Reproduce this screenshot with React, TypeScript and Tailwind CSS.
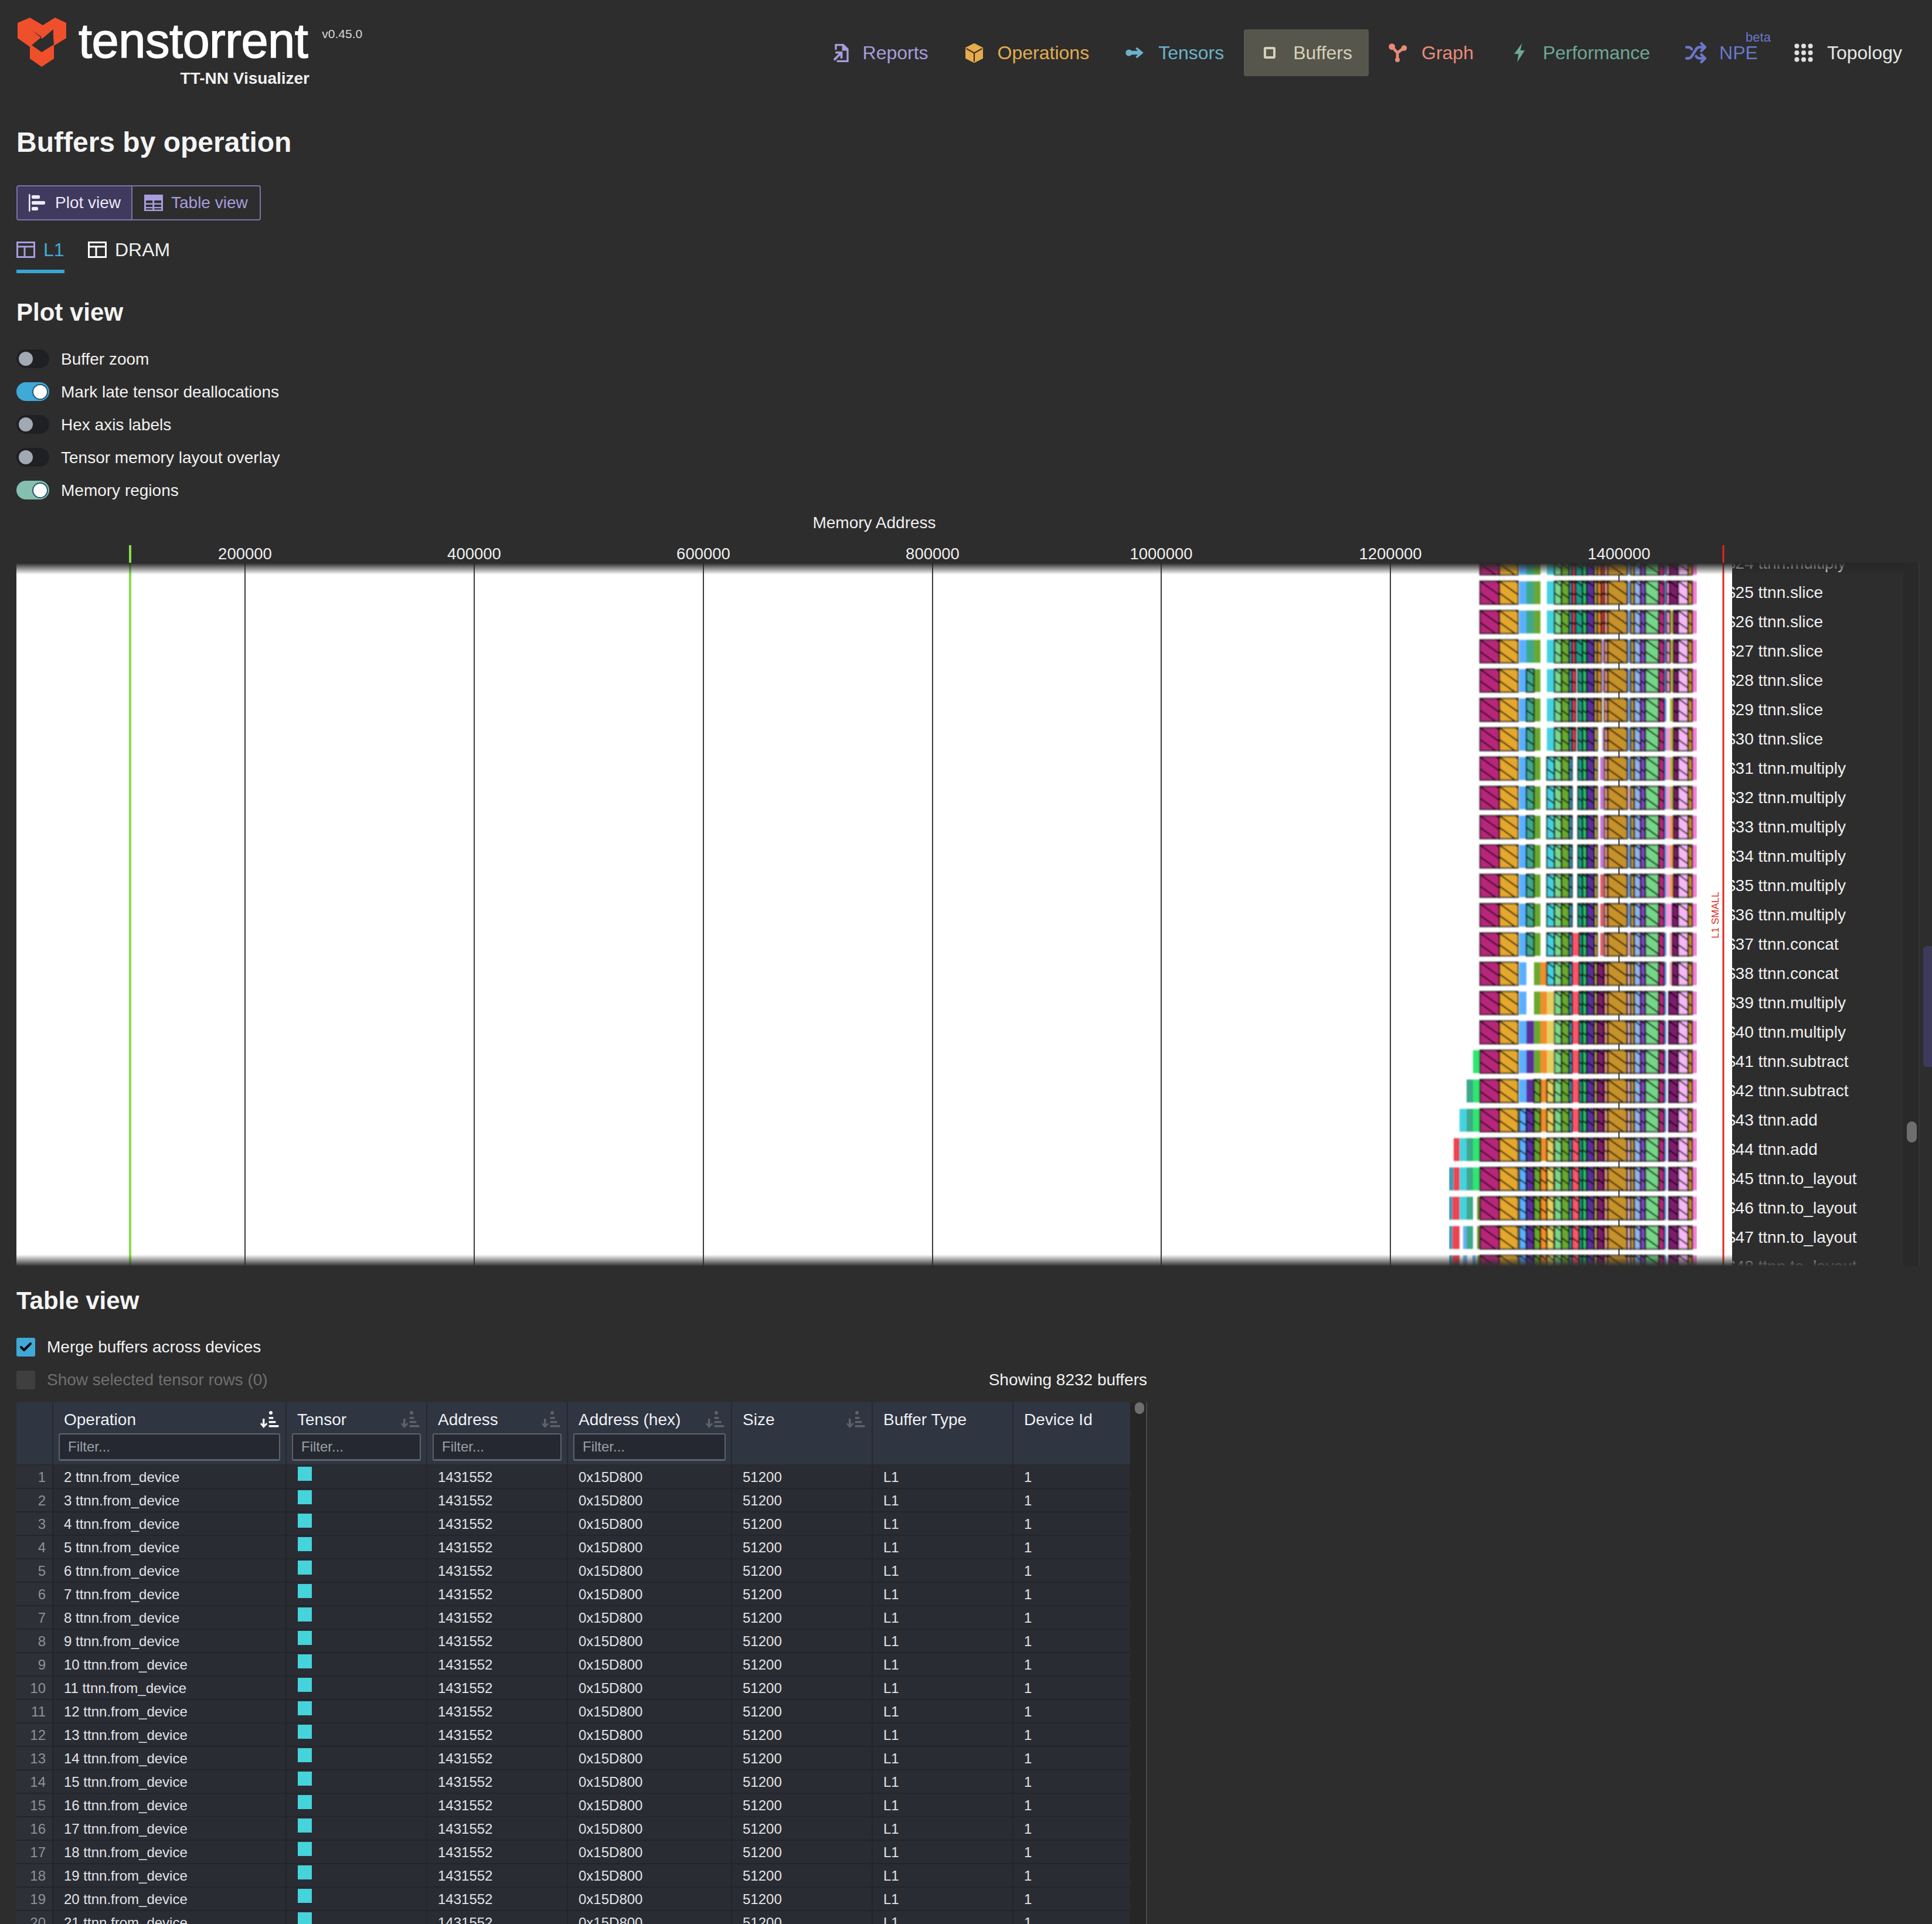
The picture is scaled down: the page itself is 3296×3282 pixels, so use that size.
import { Shuffle, Check } from "lucide-react";

type Seg = [number, number, string];

// memory chart segments: start, end, colour (page x)
const SEGS: Record<string, Seg> = {
  a: [2525, 2558, "#b8267c"],
  b: [2558, 2590, "#e5a82f"],
  c: [2592, 2604, "#5ab0ff"],
  d: [2604, 2617, "#3ea98a"],
  D: [2604, 2617, "#5b2f9b"],
  e: [2617, 2628, "#6aa82f"],
  f: [2628, 2639, "#f28c2c"],
  g: [2639, 2652, "#45d2e0"],
  g2: [2639, 2651, "#e5cf60"],
  h: [2652, 2664, "#7dd68a"],
  i: [2664, 2677, "#6aa82f"],
  j: [2677, 2682, "#3a9cc8"],
  k: [2682, 2688, "#e8424f"],
  K1: [2682, 2694, "#ff5566"],
  l: [2688, 2700, "#1f9a8a"],
  l2: [2692, 2700, "#1f9a8a"],
  l3: [2694, 2700, "#1f9a8a"],
  m: [2700, 2707, "#2cc463"],
  n: [2707, 2720, "#5b2f9b"],
  o: [2720, 2725, "#c9b452"],
  p: [2725, 2732, "#d98a2a"],
  q: [2732, 2737, "#e8424f"],
  P: [2733, 2737, "#c9a8e8"],
  P2: [2730, 2736, "#c77ad8"],
  P3: [2730, 2736, "#e0606a"],
  Q: [2725, 2736, "#7e1a6c"],
  r: [2737, 2743, "#e89a80"],
  s: [2743, 2776, "#c8922a"],
  t: [2776, 2782, "#6fa6ee"],
  U: [2776, 2782, "#d8b0d0"],
  u: [2782, 2788, "#c8a02a"],
  v: [2788, 2799, "#93b3ea"],
  w: [2799, 2807, "#8444c0"],
  x: [2807, 2830, "#74d588"],
  y: [2830, 2839, "#b8267c"],
  z: [2839, 2843, "#6fa6ee"],
  A: [2843, 2849, "#fb9ad8"],
  A2: [2843, 2853, "#fb9ad8"],
  A3: [2848, 2853, "#fbb0b8"],
  B: [2849, 2855, "#b8b83a"],
  B2: [2849, 2855, "#e9a24a"],
  C: [2855, 2863, "#7e1a6c"],
  C1: [2848, 2863, "#7e1a6c"],
  C2: [2853, 2863, "#7e1a6c"],
  C3: [2847, 2863, "#7e1a6c"],
  E: [2863, 2880, "#f5b8f5"],
  F: [2880, 2887, "#c8922a"],
  G: [2887, 2895, "#f77fd8"],
  H: [2513, 2525, "#2ee66f"],
  I: [2502, 2513, "#3ea98a"],
  J: [2490, 2502, "#45d2e0"],
  K: [2480, 2490, "#f0424f"],
  K2: [2478, 2490, "#f0424f"],
  L: [2472, 2480, "#3a9cb8"],
  L2: [2472, 2478, "#3a9cb8"],
  M: [2520, 2525, "#6a962f"],
  N: [2496, 2503, "#6ab0f0"],
  O: [2512, 2518, "#6aa0e8"],
};

const TAIL = "t u* v* w* x* y* z";
const LATE = "U* u* v* w* x* y* z";
const END = "E* F* G";
const HEAD = "a* b* c";
const MID = "h* i* j* K1 l3* m* n* o* Q* r* s*";

const ROWS: [number, string, string][] = [
  [24, "ttnn.multiply", `${HEAD} d e g h* i* j* k* l* m* n* o* p* q* r* s* ${TAIL} A* C1* ${END}`],
  [25, "ttnn.slice", `${HEAD} d e g h* i* j* k* l* m* n* o* p* q* r* s* ${TAIL} A* C1* ${END}`],
  [26, "ttnn.slice", `${HEAD} d e g h* i* j* k* l* m* n* o* p* q* r* s* ${TAIL} A* B C* ${END}`],
  [27, "ttnn.slice", `${HEAD} d e g h* i* j* k* l* m* n* o* p* P r* s* ${TAIL} A* B C* ${END}`],
  [28, "ttnn.slice", `${HEAD} d* e g h* i* j* k* l2* m* n* o* p* P r* s* ${TAIL} A* B C* ${END}`],
  [29, "ttnn.slice", `${HEAD} d* e g h* i* j* k* l2* m* n* o* p* r* s* ${TAIL} B C* ${END}`],
  [30, "ttnn.slice", `${HEAD} d* e g h* i* j* k* l2* m* n* o* P r* s* ${TAIL} A B C* ${END}`],
  [31, "ttnn.multiply", `${HEAD} d* e g* h* i* j* l2* m* n* o* P2 r* s* ${TAIL} A B C* ${END}`],
  [32, "ttnn.multiply", `${HEAD} d* e g* h* i* j* l2* m* n* o* P2 r* s* U u* v* w* x* y* z A B C* ${END}`],
  [33, "ttnn.multiply", `${HEAD} d* e g* h* i* j* l2* m* n* o* P2 r* s* ${TAIL} A B2 C* ${END}`],
  [34, "ttnn.multiply", `${HEAD} d* e g* h* i* j* l2* m* n* o* P2 r* s* ${TAIL} A B2 C* ${END}`],
  [35, "ttnn.multiply", `${HEAD} d* e g* h* i* j* l2* m* n* o* P3 r* s* ${TAIL} A B2 C* ${END}`],
  [36, "ttnn.multiply", `${HEAD} d* e g* h* i* j* l2* m* n* o* P3 r* s* ${TAIL} A2 C2* ${END}`],
  [37, "ttnn.concat", `${HEAD} d* e g* h* i* j* K1 l3* m* n* o* P3 r* s* U u* v* w* x* y* z A3 C2* ${END}`],
  [38, "ttnn.concat", `${HEAD} e f g* ${MID} ${LATE} A3 C2* ${END}`],
  [39, "ttnn.multiply", `${HEAD} e f g2 ${MID} ${LATE} C3* ${END}`],
  [40, "ttnn.multiply", `${HEAD} D e f g2 ${MID} ${LATE} C3* ${END}`],
  [41, "ttnn.subtract", `H ${HEAD} D e f g2 ${MID} ${LATE} C3* ${END}`],
  [42, "ttnn.subtract", `I H ${HEAD} D e* f g2* ${MID} ${LATE} C3* ${END}`],
  [43, "ttnn.add", `J I H a* b* c* D* e* f g2* ${MID} ${LATE} C3* ${END}`],
  [44, "ttnn.add", `K J I H a* b* c* D* e* f g2* h* i* j* K1* l3* m* n* o* Q* r* s* ${LATE} C3* ${END}`],
  [45, "ttnn.to_layout", `L K J I H a* b* c* D* e* f* g2* h* i* j* K1* l3* m* n* o* Q* r* s* ${LATE} C3* ${END}`],
  [46, "ttnn.to_layout", `L2 K2 J I M a* b* c* D* e* f* g2* h* i* j* K1* l3* m* n* o* Q* r* s* ${LATE} C3* ${END}`],
  [47, "ttnn.to_layout", `L2 K2 N I M a* b* c* D* e* f* g2* h* i* j* K1* l3* m* n* o* Q* r* s* ${LATE} C3* ${END}`],
  [48, "ttnn.to_layout", `L2 K2 N O M a* b* c* D* e* f* g2* h* i* j* K1* l3* m* n* o* Q* r* s* ${LATE} C3* ${END}`],
];

const TICKS: [number, string][] = [
  [418, "200000"],
  [809, "400000"],
  [1200, "600000"],
  [1591, "800000"],
  [1981, "1000000"],
  [2372, "1200000"],
  [2762, "1400000"],
];

const BAR_H = 39;

const Hatch = ({ w }: { w: number }) => {
  const lines = [];
  const run = w * 0.72;
  for (let y0 = -Math.ceil(run / 20) * 20; y0 < BAR_H; y0 += 20) {
    lines.push(<line key={y0} x1={0} y1={y0} x2={w} y2={y0 + run} stroke="#000" strokeOpacity={0.78} strokeWidth={2.4} />);
  }
  return <>{lines}</>;
};

const Bar = ({ n, spec }: { n: number; spec: string }) => {
  const y = 31.5 + (n - 25) * 50;
  const tokens = spec.split(" ").filter(Boolean);
  return (
    <g>
      {tokens
        .filter((t) => !t.endsWith("*"))
        .map((t) => {
          const [x0, x1, c] = SEGS[t];
          return <rect key={t} x={x0 - 28} y={y} width={x1 - x0} height={BAR_H} fill={c} />;
        })}
      {tokens
        .filter((t) => t.endsWith("*"))
        .map((t) => {
          const [x0, x1, c] = SEGS[t.slice(0, -1)];
          const w = x1 - x0;
          return (
            <g key={t}>
              <rect x={x0 - 28} y={y} width={w} height={BAR_H} fill={c} />
              <svg x={x0 - 28} y={y} width={w} height={BAR_H}>
                <Hatch w={w} />
              </svg>
              <rect x={x0 - 28} y={y} width={w} height={BAR_H} fill="none" stroke="#000" strokeOpacity={0.68} strokeWidth={2.6} />
            </g>
          );
        })}
    </g>
  );
};

const MemoryPlot = () => (
  <svg width={2927} height={1230} className="block shrink-0">
    <defs>
      <filter id="soft" x="0" y="0" width="1" height="1">
        <feGaussianBlur stdDeviation="0.8" />
      </filter>
    </defs>
    {TICKS.map(([x, label]) => (
      <text key={label} x={x - 28} y={24} textAnchor="middle" fontSize={27.5} fill="#efefef">
        {label}
      </text>
    ))}
    <svg x={0} y={30} width={2927} height={1200}>
      <rect width={2927} height={1200} fill="#fff" />
      {TICKS.map(([x, label]) => (
        <line key={label} x1={x - 28} x2={x - 28} y1={0} y2={1200} stroke="#3a3a3a" strokeWidth={2} />
      ))}
      <g filter="url(#soft)">
        {ROWS.map(([n, , spec]) => (
          <Bar key={n} n={n} spec={spec} />
        ))}
      </g>
    </svg>
    <line x1={194} x2={194} y1={0} y2={1230} stroke="#84e04a" strokeWidth={4} />
    <line x1={2912} x2={2912} y1={0} y2={1230} stroke="#e0281e" strokeWidth={3} />
    <text x={2904} y={631} textAnchor="middle" fontSize={17} fill="#e0281e" transform="rotate(-90 2904 631)">
      L1 SMALL
    </text>
  </svg>
);

const Logo = () => (
  <svg viewBox="0 0 84 84" className="w-[84px] h-[84px] shrink-0">
    <path
      fill="#f04f2c"
      d="M21 0 L43 13 L64 0 L83 9 V35 L62 48 V70 L41 84 L21 70 V50 L0 35 V9 Z"
    />
    <path fill="#2d2d2d" d="M24 21 L42 36 L61 20 V34 L62 46 L41 59 L24 47 L41 33 Z" />
  </svg>
);

const ReportsIcon = () => (
  <svg viewBox="1.8 0.6 12.6 14.8" className="w-[29px] h-[33px] ml-1.5 shrink-0" fill="#a79ddd">
    <path d="M3.5 1h6.7L14 4.8V15H5v-1.5h7.5V6.2H9V2.5H5v3H3.5z" />
    <path d="M4 6.8h5.4v5.4H7.7V9.7l-4.2 4.2-1.2-1.2 4.2-4.2H4z" />
  </svg>
);

const CubeIcon = () => (
  <svg viewBox="1 0.2 14 15.6" className="w-[30px] h-[33px] shrink-0">
    <path d="M8 .6 14.6 4v8L8 15.4 1.4 12V4z" fill="#e2ac4f" stroke="#e2ac4f" strokeLinejoin="round" />
    <path d="M1.6 4.4 8 8l6.4-3.6M8 8v7" fill="none" stroke="#4a2a10" strokeWidth="1" />
  </svg>
);

const FlowIcon = () => (
  <svg viewBox="0 0 16 16" className="w-8 h-8" fill="#6cb2c9">
    <circle cx="3" cy="8" r="2.8" />
    <path d="M4 6.4h6.6L8.6 4.4 9.9 3.4 15.4 8l-5.5 4.6-1.3-1 2-2H4z" />
  </svg>
);

const SquareIcon = () => (
  <svg viewBox="0 0 16 16" className="w-8 h-8" fill="none" stroke="#d5d1b8" strokeWidth="2">
    <rect x="4" y="4" width="8" height="8" rx="0.6" />
  </svg>
);

const GraphIcon = () => (
  <svg viewBox="0 0 16 16" className="w-8 h-8" fill="#ea8a7a" stroke="#ea8a7a">
    <path d="M3 3 L7.5 8 L13 4 M7.5 8 V13.5" strokeWidth="2.4" fill="none" />
    <circle cx="2.8" cy="2.8" r="2.2" />
    <circle cx="13.2" cy="4" r="1.9" />
    <circle cx="7.5" cy="14" r="1.5" />
  </svg>
);

const BoltIcon = () => (
  <svg viewBox="0 0 16 16" className="w-8 h-8" fill="#6fa897">
    <path d="M10.2 0 3.6 9h3.7L6.2 16l6.4-10H8.9z" />
  </svg>
);

const GridIcon = () => (
  <svg viewBox="0 0 16 16" className="w-8 h-8" fill="#e0e0e0">
    {[2.2, 8, 13.8].map((cx) =>
      [2.2, 8, 13.8].map((cy) => <circle key={`${cx}-${cy}`} cx={cx} cy={cy} r="2" />),
    )}
  </svg>
);

const GanttIcon = () => (
  <svg viewBox="0 0 16 16" className="w-8 h-8" fill="#ece9f8">
    <rect x="0.5" y="0.5" width="1.3" height="15" rx="0.6" />
    <rect x="3" y="1.5" width="7" height="3" rx="1" />
    <rect x="3" y="6.5" width="11.5" height="3" rx="1" />
    <rect x="3" y="11.5" width="5.5" height="3" rx="1" />
  </svg>
);

const TableIcon = () => (
  <svg viewBox="0 0 16 16" className="w-8 h-8" fill="#a79ddd">
    <path d="M0 1h16v14H0z" />
    <path fill="#2d2d2d" d="M1.5 6h5.6v2.2H1.5zM8.6 6h5.9v2.2H8.6zM1.5 9.5h5.6v2H1.5zM8.6 9.5h5.9v2H8.6zM1.5 12.6h5.6v1.2H1.5zM8.6 12.6h5.9v1.2H8.6z" />
  </svg>
);

const PanelIcon = ({ color }: { color: string }) => (
  <svg viewBox="0 0 16 14" className="w-8 h-7" fill="none" stroke={color} strokeWidth="1.5">
    <rect x="0.75" y="0.75" width="14.5" height="12.5" />
    <path d="M.75 4.4h14.5M7 4.4v8.8" />
  </svg>
);

const SortIcon = ({ active }: { active?: boolean }) => (
  <svg viewBox="0 0 32 30" className="w-8 h-[30px] shrink-0" fill={active ? "#ffffff" : "#5f6269"}>
    <path d="M4 13h3.4v10l3-3 2 2-6.7 7L0 22l2-2 2 3z" />
    <circle cx="18" cy="3" r="3" />
    <rect x="14.5" y="10" width="8" height="3.4" rx="1" />
    <rect x="14.5" y="17" width="12" height="3.4" rx="1" />
    <rect x="14.5" y="24" width="17" height="3.4" rx="1" />
  </svg>
);

const NavItem = ({
  icon,
  label,
  text,
  active,
  beta,
}: {
  icon: React.ReactNode;
  label: string;
  text: string;
  active?: boolean;
  beta?: boolean;
}) => (
  <div className={`relative flex items-center h-20 px-7 gap-6 rounded-[4px] text-[32px] ${text} ${active ? "bg-[#57564c]" : ""}`}>
    <span className="w-8 h-8 flex items-center justify-center">{icon}</span>
    <span>{label}</span>
    {beta && <span className="absolute right-1.5 -top-[3px] text-[22px] text-[#6a78c9]">beta</span>}
  </div>
);

const Toggle = ({ label, color }: { label: string; color?: string }) => (
  <div className="flex items-center h-14">
    {color ? (
      <div className={`w-14 h-8 rounded-full flex items-center ${color}`}>
        <div className="ml-[27px] w-[27px] h-[27px] rounded-full bg-white border-2 border-[#24566c]" />
      </div>
    ) : (
      <div className="w-14 h-8 rounded-full flex items-center bg-[#1f2023]">
        <div className="ml-1 w-6 h-6 rounded-full bg-[#a3a8b5]" />
      </div>
    )}
    <span className="ml-5 pt-0.5 text-[28px] text-[#f2f2f2]">{label}</span>
  </div>
);

const COLS = "grid grid-cols-[61px_398px_240px_240px_280px_240px_240px_201px]";

const HeaderCell = ({ label, sort, active, filter }: { label: string; sort?: boolean; active?: boolean; filter?: boolean }) => (
  <div className="border-l-2 border-[#262931] h-full pt-[10px]">
    <div className="flex items-center justify-between h-10 pl-[18px] pr-[11px] text-[28px] text-[#eef0f3]">
      <span>{label}</span>
      {sort && <SortIcon active={active} />}
    </div>
    {filter && (
      <div className="mx-[9px] mt-[3px] h-[47px] flex items-center pl-3.5 bg-[#252830] border-2 border-b-[3px] border-[#5d636b] rounded-[3px] text-[24px] text-[#9aa0a8]">
        Filter...
      </div>
    )}
  </div>
);

const BodyCell = ({ children }: { children?: React.ReactNode }) => (
  <div className="border-l-2 border-[#23252b] h-full flex items-center pl-[18px] pt-0.5">{children}</div>
);

const App = () => {
  const rows = Array.from({ length: 20 }, (_, i) => i + 1);
  return (
    <div className="relative w-[3296px] h-[3282px] overflow-hidden bg-[#2d2d2d] text-white font-['Liberation_Sans',Arial,sans-serif]">
      <header className="flex justify-between h-[215px]">
        <div className="flex pl-[30px] pt-[30px]">
          <Logo />
          <div className="ml-5 pt-1">
            <div className="flex">
              <span className="text-[83px] leading-[72px] tracking-[-0.5px] text-white [-webkit-text-stroke:1.5px_#ffffff]">tenstorrent</span>
              <span className="ml-6 mt-[12px] text-[21px] leading-[24px] text-[#d8d8d8]">v0.45.0</span>
            </div>
            <div className="w-[394px] text-right text-[28px] leading-[36px] font-bold text-[#f0f0f0] mt-[10px]">TT-NN Visualizer</div>
          </div>
        </div>
        <nav className="flex items-start gap-1.5 pt-[50px] pr-[23px]">
          <NavItem icon={<ReportsIcon />} label="Reports" text="text-[#a79ddd]" />
          <NavItem icon={<CubeIcon />} label="Operations" text="text-[#e2ac4f]" />
          <NavItem icon={<FlowIcon />} label="Tensors" text="text-[#6cb2c9]" />
          <NavItem icon={<SquareIcon />} label="Buffers" text="text-[#d5d1b8]" active />
          <NavItem icon={<GraphIcon />} label="Graph" text="text-[#ea8a7a]" />
          <NavItem icon={<BoltIcon />} label="Performance" text="text-[#6fa897]" />
          <NavItem icon={<Shuffle size={38} strokeWidth={2.8} className="shrink-0" />} label="NPE" text="text-[#6a78c9]" beta />
          <NavItem icon={<GridIcon />} label="Topology" text="text-[#e6e6e6]" />
        </nav>
      </header>

      <main className="pl-7">
        <h1 className="-mt-0.5 h-[60px] leading-[60px] text-[48px] font-bold text-[#f4f4f4]">Buffers by operation</h1>

        <div className="mt-[43px] flex w-[417px] h-[60px] border-2 border-[#7d73a8] rounded-[4px]">
          <div className="flex items-center gap-[14px] w-[194px] pl-[18px] bg-[#3f3a5e] text-[28px] text-[#ece9f8]">
            <GanttIcon />
            <span>Plot view</span>
          </div>
          <div className="flex items-center gap-[14px] flex-1 pl-5 border-l-2 border-[#7d73a8] text-[28px] text-[#a79ddd]">
            <TableIcon />
            <span>Table view</span>
          </div>
        </div>

        <div className="mt-5 flex gap-10 h-[70px]">
          <div className="flex items-start gap-[14px] w-[82px] border-b-[6px] border-[#38a6d6] pt-4">
            <PanelIcon color="#a79ddd" />
            <span className="text-[32px] leading-7 text-[#45a9d6]">L1</span>
          </div>
          <div className="flex items-start gap-[14px] pt-4">
            <PanelIcon color="#ffffff" />
            <span className="text-[32px] leading-7 text-[#f0f0f0]">DRAM</span>
          </div>
        </div>

        <h2 className="mt-[37px] h-[60px] leading-[60px] text-[42px] font-bold text-[#f4f4f4]">Plot view</h2>

        <div className="mt-[21px]">
          <Toggle label="Buffer zoom" />
          <Toggle label="Mark late tensor deallocations" color="bg-[#3fa9d8]" />
          <Toggle label="Hex axis labels" />
          <Toggle label="Tensor memory layout overlay" />
          <Toggle label="Memory regions" color="bg-[#85bfb0]" />
        </div>

        <div className="mt-2 w-[2927px] h-10 leading-10 text-center text-[28px] text-[#efefef]">Memory Address</div>

        <div className="relative mt-[18px] flex h-[1230px]">
          <MemoryPlot />
          <div className="mt-[30px] w-[292px] h-[1200px] overflow-hidden">
            <div className="-mt-6 -ml-2.5">
              {ROWS.map(([n, op]) => (
                <div key={n} className="h-[50px] leading-[50px] text-[28px] text-[#f0f0f0] whitespace-nowrap">
                  ${n} {op}
                </div>
              ))}
            </div>
          </div>
          <div className="relative mt-[30px] w-7 h-[1200px] bg-[#292929] border-r-2 border-[#353535]">
            <div className="absolute left-1.5 top-[953px] w-[17px] h-9 rounded-full bg-[#6e6e6e]" />
          </div>
          <div className="absolute left-0 top-[30px] w-[3219px] h-5 bg-gradient-to-b from-[#262626] to-transparent" />
          <div className="absolute left-0 top-[1210px] w-[3219px] h-5 bg-gradient-to-t from-[#2d2d2d] to-transparent" />
        </div>

        <h2 className="mt-[29px] h-[60px] leading-[60px] text-[42px] font-bold text-[#f4f4f4]">Table view</h2>

        <div className="mt-[21px] flex items-center h-14">
          <div className="w-8 h-8 rounded-[3px] bg-[#3fa9d8] flex items-center justify-center text-black">
            <Check size={24} strokeWidth={4} />
          </div>
          <span className="ml-5 text-[28px] text-[#f2f2f2]">Merge buffers across devices</span>
        </div>
        <div className="flex items-center justify-between w-[1929px] h-14">
          <div className="flex items-center">
            <div className="w-8 h-8 rounded-[3px] bg-[#3f3f3f]" />
            <span className="ml-5 text-[28px] text-[#6f6f6f]">Show selected tensor rows (0)</span>
          </div>
          <span className="text-[28px] text-[#f2f2f2]">Showing 8232 buffers</span>
        </div>

        <div className="mt-2.5 flex items-start w-[1929px]">
          <div className="w-[1900px]">
            <div className={`${COLS} h-[108px] bg-[#2f3541] border-b-2 border-[#262931]`}>
              <div />
              <HeaderCell label="Operation" sort active filter />
              <HeaderCell label="Tensor" sort filter />
              <HeaderCell label="Address" sort filter />
              <HeaderCell label="Address (hex)" sort filter />
              <HeaderCell label="Size" sort />
              <HeaderCell label="Buffer Type" />
              <HeaderCell label="Device Id" />
            </div>
            {rows.map((r) => (
              <div key={r} className={`${COLS} h-10 bg-[#2a2c33] border-b-2 border-[#23252b] text-[24px] text-[#e2e4e8]`}>
                <div className="h-full flex items-center justify-end pr-[11px] pt-0.5 bg-[#2d3037] text-[#8d919a]">{r}</div>
                <BodyCell>{r + 1} ttnn.from_device</BodyCell>
                <div className="border-l-2 border-[#23252b] h-full pl-[19px] pt-0.5">
                  <div className="w-6 h-6 bg-[#45d3dc]" />
                </div>
                <BodyCell>1431552</BodyCell>
                <BodyCell>0x15D800</BodyCell>
                <BodyCell>51200</BodyCell>
                <BodyCell>L1</BodyCell>
                <BodyCell>1</BodyCell>
              </div>
            ))}
          </div>
          <div className="relative w-[29px] h-[900px] bg-[#262626] border-r-2 border-[#4a4a4a]">
            <div className="absolute left-2 top-0 w-4 h-5 rounded-full bg-[#6e6e6e]" />
          </div>
        </div>
      </main>

      <div className="absolute right-0 top-[1614px] w-[15px] h-[206px] rounded-l-[6px] bg-[#3e3a5c]" />
    </div>
  );
};

export default App;
